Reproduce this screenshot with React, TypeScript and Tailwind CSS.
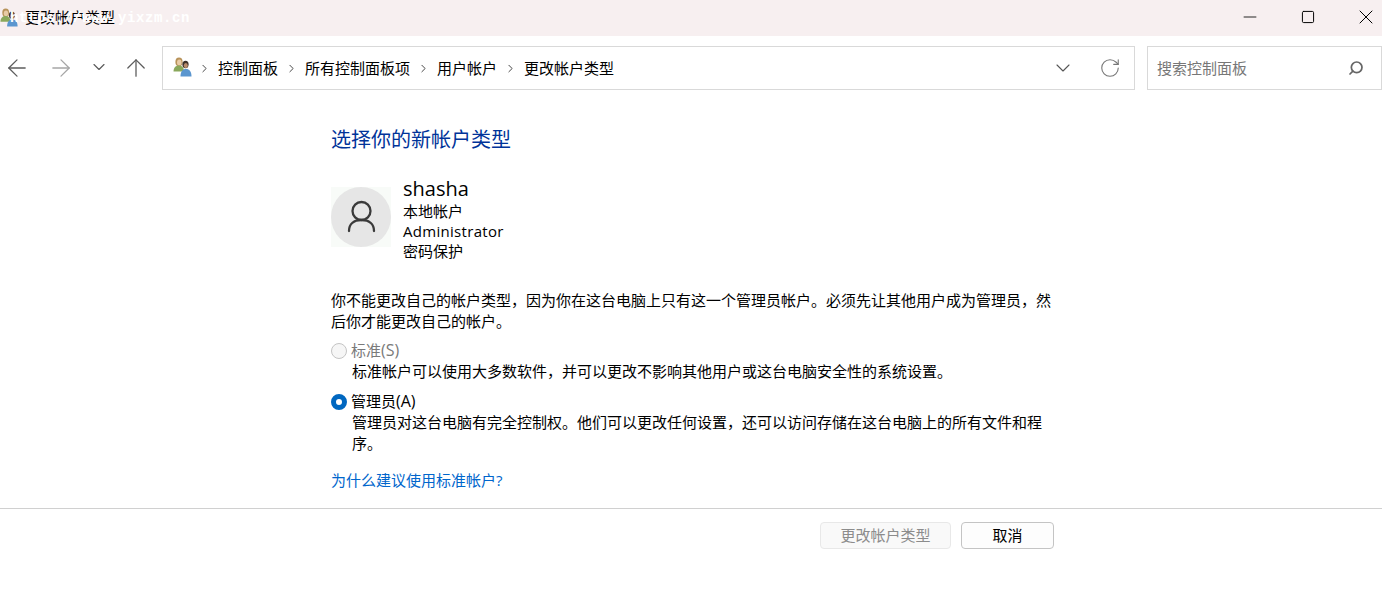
import { ArrowLeft, ArrowRight, ArrowUp, ChevronDown, ChevronRight, RotateCw, Minus, Square, X, Search } from "lucide-react";

const font = "font-['Open_Sans','Noto_Sans_CJK_SC',sans-serif]";

const UsersIcon = ({ className }: { className: string }) => (
  <svg viewBox="0 0 20 20" className={className}>
    <ellipse cx="6" cy="5" rx="3.6" ry="4.4" fill="#b8935a" />
    <ellipse cx="6.3" cy="5.6" rx="2.3" ry="3" fill="#e8cba6" />
    <path d="M0.5 14.500c0-4 2.400-6 5.500-6s5 2 5 6z" fill="#8aa85c" />
    <ellipse cx="12.500" cy="7.500" rx="3.100" ry="3.700" fill="#3f332c" />
    <ellipse cx="12.800" cy="8.500" rx="2" ry="2.500" fill="#b98c6c" />
    <path d="M7.500 19.500c0-5 2-7.500 5.500-7.500s5.500 2.500 5.500 7.500z" fill="#5b96cf" />
  </svg>
);

const Crumb = ({ label }: { label: string }) => (
  <>
    <div className="flex w-[27px] justify-center">
      <ChevronRight size={13} strokeWidth={1.8} className="text-[#444]" />
    </div>
    <span>{label}</span>
  </>
);

export default function App() {
  return (
    <div className={`${font} h-[601px] w-[1382px] overflow-hidden bg-white text-[15px] text-black`}>
      {/* title bar */}
      <div className="relative flex h-[36px] items-center bg-[#f7eff0]">
        <UsersIcon className="h-[19px] w-[19px] mb-[1px]" />
        <span className="ml-[6px] mb-[2px] text-[15px] text-black">更改帐户类型</span>
        <span className="absolute left-[10px] top-[8px] font-['Liberation_Mono',monospace] text-[14px] font-bold tracking-[0.6px] text-white">https://www.yixzm.cn</span>
        <div className="ml-auto mr-[4px] mb-[2px] flex items-center gap-[34px] text-black">
          <Minus size={24} strokeWidth={1} className="scale-[0.85]" />
          <Square size={24} strokeWidth={1.6} className="scale-[0.62]" />
          <X size={24} strokeWidth={1} />
        </div>
      </div>

      {/* nav + address */}
      <div className="flex h-[64px] items-center">
        <div className="flex w-[162px] items-center text-[#5c5c5c]">
          <ArrowLeft size={28} strokeWidth={1.1} className="ml-[3px]" />
          <ArrowRight size={28} strokeWidth={1.1} className="ml-[16px] text-[#a6a6a6]" />
          <ChevronDown size={20} strokeWidth={1.4} className="ml-[14px] mb-[2px]" />
          <ArrowUp size={28} strokeWidth={1.1} className="ml-[13px]" />
        </div>
        <div className="flex h-[44px] w-[973px] items-center border border-[#d9d9d9] pl-[10px]">
          <UsersIcon className="mb-[2px] mr-[-2px] h-[20px] w-[20px]" />
          <Crumb label="控制面板" />
          <Crumb label="所有控制面板项" />
          <Crumb label="用户帐户" />
          <Crumb label="更改帐户类型" />
          <ChevronDown size={24} strokeWidth={1.1} className="ml-auto text-[#555]" />
          <RotateCw size={22} strokeWidth={1.2} className="ml-[24px] mr-[13px] text-[#777]" />
        </div>
        <div className="ml-[12px] flex h-[44px] flex-1 items-center border border-[#d9d9d9] pl-[9px] text-[#777]">
          <span>搜索控制面板</span>
          <Search size={16} strokeWidth={2.6} className="ml-auto mr-[17px] -scale-x-100 text-[#666]" />
        </div>
      </div>

      {/* content */}
      <div className="ml-[331px] w-[725px] pt-[25px]">
        <h1 className="text-[20px] leading-[30px] text-[#003399]">选择你的新帐户类型</h1>
        <div className="mt-[21px] flex items-start gap-[12px]">
          <div className="mt-[11px] h-[60px] w-[60px] bg-[#f8fbf8]">
            <div className="flex h-full w-full items-center justify-center rounded-full bg-[#e6e6e6]">
              <svg viewBox="0 0 36 36" className="h-[36px] w-[36px]" fill="none" stroke="#3a3a3a" strokeWidth="2.3" strokeLinecap="round">
                <circle cx="18.500" cy="12" r="9" />
                <path d="M6 32c0-7 5-11 12.500-11S31 25 31 32" />
              </svg>
            </div>
          </div>
          <div className="flex flex-col">
            <span className="text-[20px] leading-[25px]">shasha</span>
            <span className="leading-[20px]">本地帐户</span>
            <span className="leading-[20px] tracking-[0.3px]">Administrator</span>
            <span className="leading-[20px]">密码保护</span>
          </div>
        </div>
        <p className="mt-[29px] leading-[21px]">你不能更改自己的帐户类型，因为你在这台电脑上只有这一个管理员帐户。必须先让其他用户成为管理员，然后你才能更改自己的帐户。</p>
        <div className="mt-[8px] flex items-center gap-[4px] text-[#7a7a7a]">
          <span className="h-[16px] w-[16px] rounded-full border border-[#c4c4c4] bg-[#f6f6f6]" />
          <span className="leading-[21px]">标准<span className="text-[16px]">(S)</span></span>
        </div>
        <p className="pl-[21px] leading-[21px]">标准帐户可以使用大多数软件，并可以更改不影响其他用户或这台电脑安全性的系统设置。</p>
        <div className="mt-[9px] flex items-center gap-[4px]">
          <span className="h-[16px] w-[16px] rounded-full border-[5px] border-[#0067c0] bg-white" />
          <span className="leading-[21px]">管理员<span className="text-[16px]">(A)</span></span>
        </div>
        <p className="pl-[21px] leading-[21px]">管理员对这台电脑有完全控制权。他们可以更改任何设置，还可以访问存储在这台电脑上的所有文件和程序。</p>
        <a className="mt-[16px] block leading-[21px] text-[#0066cc]">为什么建议使用标准帐户?</a>
      </div>

      {/* footer */}
      <div className="mt-[17px] flex justify-end gap-[10px] border-t border-[#d0d0d0] pr-[328px] pt-[13px]">
        <button className="h-[27px] w-[131px] rounded-[4px] border border-[#e8e8e8] bg-[#f9f9f9] text-[15px] text-[#8c8c8c]">更改帐户类型</button>
        <button className="h-[27px] w-[93px] rounded-[4px] border border-[#c4c4c4] bg-[#fdfdfd] text-[15px] text-black">取消</button>
      </div>
    </div>
  );
}
